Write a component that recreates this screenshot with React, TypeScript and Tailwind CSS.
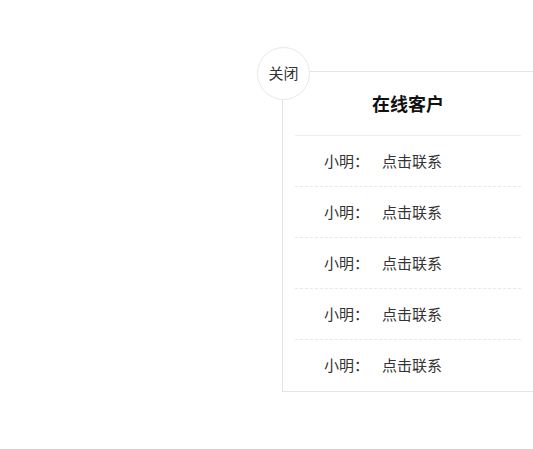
const rows = ["小明", "小明", "小明", "小明", "小明"];

export default function App() {
  return (
    <div
      className="w-[533px] h-[449px] bg-white flex justify-end items-start pt-[71px] text-[#333]"
      style={{ fontFamily: '"Noto Sans CJK SC", "Noto Sans", sans-serif' }}
    >
      <div className="relative w-[251px] bg-white border-l border-t border-b border-[#e5e5e5]">
        <button className="absolute -left-[26px] -top-[25px] w-[53px] h-[53px] rounded-full bg-white border border-[#e8e8e8] flex items-center justify-center text-[15px] text-[#333]">
          关闭
        </button>
        <div className="px-3">
          <div className="h-[64px] flex items-center justify-center border-b border-[#eeeeee] text-[18px] font-bold text-[#111]">
            在线客户
          </div>
          <ul>
            {rows.map((name, i) => (
              <li
                key={i}
                className={`h-[51px] flex items-center pl-[29px] text-[15px] ${
                  i < rows.length - 1 ? "border-b border-dashed border-[#e8e8e8]" : ""
                }`}
              >
                <span>{name}：</span>
                <span className="ml-[13px]">点击联系</span>
              </li>
            ))}
          </ul>
        </div>
      </div>
    </div>
  );
}
